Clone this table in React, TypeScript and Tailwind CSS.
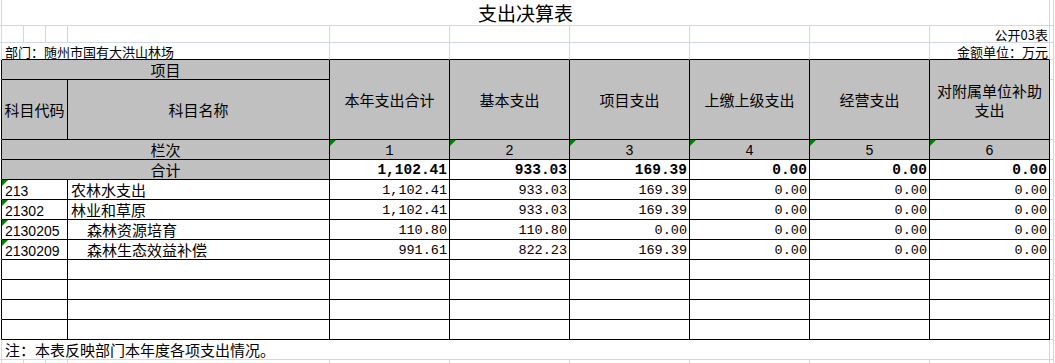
const heads = ["本年支出合计", "基本支出", "项目支出", "上缴上级支出", "经营支出", "对附属单位补助支出"];

const totals = ["1,102.41", "933.03", "169.39", "0.00", "0.00", "0.00"];

const rows = [
  { code: "213", name: "农林水支出", sub: false, v: ["1,102.41", "933.03", "169.39", "0.00", "0.00", "0.00"] },
  { code: "21302", name: "林业和草原", sub: false, v: ["1,102.41", "933.03", "169.39", "0.00", "0.00", "0.00"] },
  { code: "2130205", name: "森林资源培育", sub: true, v: ["110.80", "110.80", "0.00", "0.00", "0.00", "0.00"] },
  { code: "2130209", name: "森林生态效益补偿", sub: true, v: ["991.61", "822.23", "169.39", "0.00", "0.00", "0.00"] },
];

const light = "border-r border-b border-[#d0d7e5]";
const black = "border-r border-b border-black";
const gutter = "border-r border-b border-r-black border-b-[#d0d7e5]";

function Tri() {
  return (
    <span className="absolute left-0 top-0 h-0 w-0 border-t-[6px] border-r-[6px] border-t-[#008000] border-r-transparent" />
  );
}

function Stub() {
  return <div className={light} />;
}

export default function App() {
  return (
    <div className="h-[363px] w-[1055px] overflow-hidden bg-white font-['Noto_Sans_CJK_SC',sans-serif] text-black">
      <div className="grid grid-cols-[2px_22px_22px_22px_262px_repeat(6,120px)_4px] grid-rows-[26px_17px_17px_20px_60px_20px_20px_repeat(8,20px)_20px_20px]">
        {/* title */}
        <div className={light} />
        <div className={`col-span-10 flex items-center justify-center text-[19px] leading-none ${light}`}>
          支出决算表
        </div>
        <Stub />

        {/* 公开03表 */}
        <div className={light} />
        {[0, 1, 2, 3, 4, 5, 6, 7, 8].map((i) => (
          <div key={i} className={light} />
        ))}
        <div className={`flex items-center justify-end pr-px text-[13px] leading-none ${light}`}>公开03表</div>
        <Stub />

        {/* 部门 */}
        <div className={light} />
        <div className="col-span-4 flex items-center border-r border-b border-r-[#d0d7e5] border-b-black pl-[3px] text-[13px] leading-none">
          部门：随州市国有大洪山林场
        </div>
        {[0, 1, 2, 3, 4].map((i) => (
          <div key={i} className="border-r border-b border-r-[#d0d7e5] border-b-black" />
        ))}
        <div className="flex items-center justify-end border-r border-b border-r-[#d0d7e5] border-b-black pr-px text-[13px] leading-none">
          金额单位：万元
        </div>
        <Stub />

        {/* header */}
        <div className={gutter} />
        <div className={`col-span-4 flex items-center justify-center bg-[#c0c0c0] text-[15px] leading-none ${black}`}>项目</div>
        {heads.map((h) => (
          <div
            key={h}
            className={`row-span-2 flex items-center justify-center bg-[#c0c0c0] px-1 text-center text-[15px] leading-[19px] ${black}`}
          >
            {h}
          </div>
        ))}
        <Stub />

        <div className={gutter} />
        <div className={`col-span-3 flex items-center justify-center bg-[#c0c0c0] text-[15px] leading-none ${black}`}>科目代码</div>
        <div className={`flex items-center justify-center bg-[#c0c0c0] text-[15px] leading-none ${black}`}>科目名称</div>
        <Stub />

        {/* 栏次 */}
        <div className={gutter} />
        <div className={`col-span-4 flex items-center justify-center bg-[#c0c0c0] text-[15px] leading-none ${black}`}>栏次</div>
        {[1, 2, 3, 4, 5, 6].map((n) => (
          <div
            key={n}
            className={`relative flex items-center justify-center bg-[#c0c0c0] pt-[2px] font-['Liberation_Mono',monospace] text-[14px] leading-none ${black}`}
          >
            <Tri />
            {n}
          </div>
        ))}
        <Stub />

        {/* 合计 */}
        <div className={gutter} />
        <div className={`col-span-4 flex items-center justify-center bg-[#c0c0c0] text-[15px] leading-none ${black}`}>合计</div>
        {totals.map((v, i) => (
          <div
            key={i}
            className={`flex items-center justify-end pr-[2px] pt-[2px] font-['Liberation_Mono',monospace] text-[14.5px] font-bold leading-none ${black}`}
          >
            {v}
          </div>
        ))}
        <Stub />

        {/* data */}
        {rows.map((r) => (
          <div key={r.code} className="contents">
            <div className={gutter} />
            <div
              className={`relative col-span-3 flex items-center pl-[3px] pt-[2px] font-['Liberation_Sans',sans-serif] text-[14px] leading-none ${black}`}
            >
              <Tri />
              {r.code}
            </div>
            <div className={`flex items-center text-[15px] leading-none ${r.sub ? "pl-[19px]" : "pl-[3px]"} ${black}`}>
              {r.name}
            </div>
            {r.v.map((v, i) => (
              <div
                key={i}
                className={`flex items-center justify-end pr-[2px] pt-[2px] font-['Liberation_Mono',monospace] text-[13.5px] leading-none ${black}`}
              >
                {v}
              </div>
            ))}
            <Stub />
          </div>
        ))}

        {[0, 1, 2, 3].map((k) => (
          <div key={k} className="contents">
            <div className={gutter} />
            <div className={`col-span-3 ${black}`} />
            <div className={black} />
            {[0, 1, 2, 3, 4, 5].map((i) => (
              <div key={i} className={black} />
            ))}
            <Stub />
          </div>
        ))}

        {/* note */}
        <div className={light} />
        <div className={`col-span-10 flex items-center pl-[3px] text-[15px] leading-none ${light}`}>
          注：本表反映部门本年度各项支出情况。
        </div>
        <Stub />

        <div className={light} />
        {[0, 1, 2, 3, 4, 5, 6, 7, 8, 9].map((i) => (
          <div key={i} className={light} />
        ))}
        <Stub />
      </div>
    </div>
  );
}
